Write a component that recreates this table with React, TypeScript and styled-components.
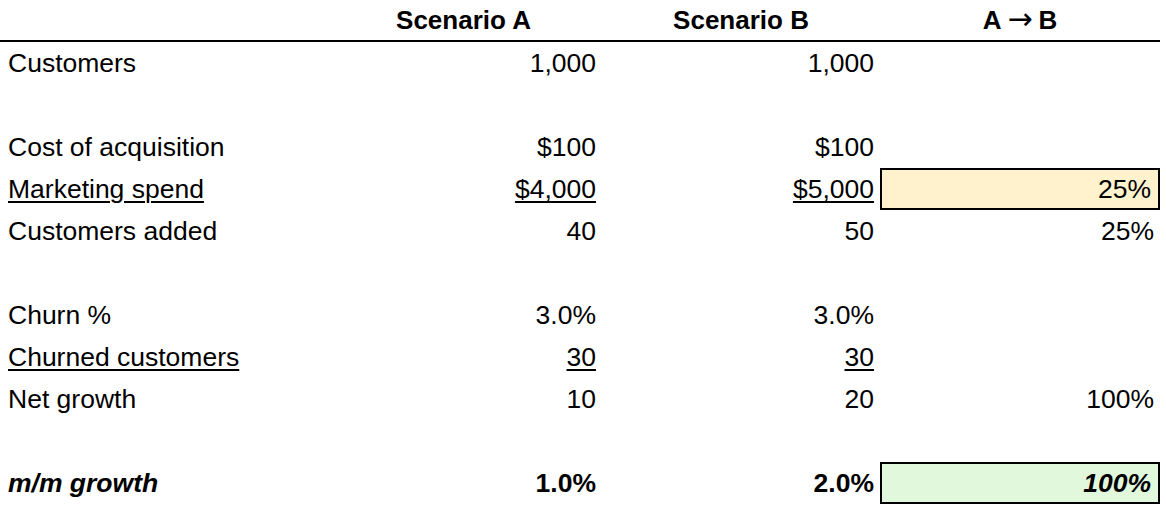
import styled, { createGlobalStyle } from "styled-components";

const Global = createGlobalStyle`
  body {
    margin: 0;
    background: #fff;
    font-family: "Liberation Sans", Arial, sans-serif;
    color: #000;
  }
`;

const Sheet = styled.div`
  width: 1160px;
  font-size: 26.5px;
`;

const Row = styled.div<{ $head?: boolean }>`
  display: grid;
  grid-template-columns: 325px 277px 278px 280px;
  height: ${(p) => (p.$head ? "40px" : "42px")};
  line-height: ${(p) => (p.$head ? "40px" : "42px")};
  border-bottom: ${(p) => (p.$head ? "2px solid #000" : "none")};
`;

const Head = styled.div`
  font-weight: bold;
  font-size: 26px;
  text-align: center;
  white-space: nowrap;
`;

const Arrow = styled.span`
  font-family: "DejaVu Sans", sans-serif;
  font-weight: normal;
  font-size: 30px;
  line-height: 0;
  margin: 0 6px;
`;

const Label = styled.div<{ $strong?: boolean }>`
  padding-left: 8px;
  white-space: nowrap;
  font-weight: ${(p) => (p.$strong ? "bold" : "normal")};
  font-style: ${(p) => (p.$strong ? "italic" : "normal")};
`;

const Value = styled.div<{ $strong?: boolean; $italic?: boolean; $fill?: string }>`
  box-sizing: border-box;
  text-align: right;
  white-space: nowrap;
  padding-right: ${(p) => (p.$fill ? "7px" : "6px")};
  font-weight: ${(p) => (p.$strong ? "bold" : "normal")};
  font-style: ${(p) => (p.$italic ? "italic" : "normal")};
  background: ${(p) => p.$fill ?? "transparent"};
  border: ${(p) => (p.$fill ? "2px solid #000" : "none")};
  line-height: ${(p) => (p.$fill ? "38px" : "inherit")};
`;

const Under = styled.span`
  text-decoration: underline;
  text-decoration-thickness: 2px;
  text-underline-offset: 3px;
`;

type Line = {
  label?: string;
  a?: string;
  b?: string;
  c?: string;
  under?: boolean;
  fill?: string;
  strong?: boolean;
};

const lines: Line[] = [
  { label: "Customers", a: "1,000", b: "1,000" },
  {},
  { label: "Cost of acquisition", a: "$100", b: "$100" },
  { label: "Marketing spend", a: "$4,000", b: "$5,000", c: "25%", under: true, fill: "#FFF2CC" },
  { label: "Customers added", a: "40", b: "50", c: "25%" },
  {},
  { label: "Churn %", a: "3.0%", b: "3.0%" },
  { label: "Churned customers", a: "30", b: "30", under: true },
  { label: "Net growth", a: "10", b: "20", c: "100%" },
  {},
  { label: "m/m growth", a: "1.0%", b: "2.0%", c: "100%", fill: "#E2F8DD", strong: true },
];

function Text({ v, under }: { v?: string; under?: boolean }) {
  if (!v) return null;
  return under ? <Under>{v}</Under> : <>{v}</>;
}

export default function App() {
  return (
    <Sheet>
      <Global />
      <Row $head>
        <div />
        <Head>Scenario A</Head>
        <Head>Scenario B</Head>
        <Head>
          A<Arrow>→</Arrow>B
        </Head>
      </Row>
      {lines.map((l, i) => (
        <Row key={i}>
          <Label $strong={l.strong}>
            <Text v={l.label} under={l.under} />
          </Label>
          <Value $strong={l.strong}>
            <Text v={l.a} under={l.under} />
          </Value>
          <Value $strong={l.strong}>
            <Text v={l.b} under={l.under} />
          </Value>
          <Value $strong={l.strong} $italic={l.strong} $fill={l.fill}>
            <Text v={l.c} />
          </Value>
        </Row>
      ))}
    </Sheet>
  );
}
